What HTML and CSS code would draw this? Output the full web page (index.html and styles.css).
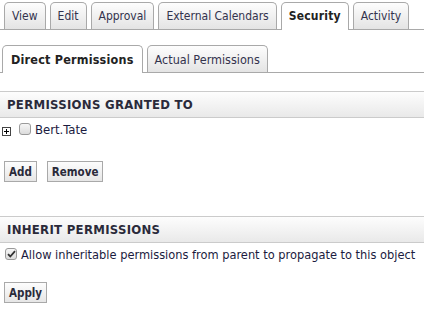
FILE: index.html
```html
<!DOCTYPE html>
<html>
<head>
<meta charset="utf-8">
<link rel="stylesheet" href="styles.css">
</head>
<body>
<div class="tabs top">
  <span class="tab">View</span>
  <span class="tab">Edit</span>
  <span class="tab">Approval</span>
  <span class="tab">External Calendars</span>
  <span class="tab active">Security</span>
  <span class="tab">Activity</span>
</div>
<div class="tabs sub">
  <span class="tab active">Direct Permissions</span>
  <span class="tab">Actual Permissions</span>
</div>
<div class="section-head">PERMISSIONS GRANTED TO</div>
<div class="perm-row">
  <span class="expander"><svg width="9" height="9" viewBox="0 0 9 9"><rect x="0.5" y="0.5" width="8" height="8" fill="#fff" stroke="#444"/><path d="M2 4.5h5M4.5 2v5" stroke="#000"/></svg></span>
  <span class="cb"></span>
  <span class="name">Bert.Tate</span>
</div>
<div class="buttons">
  <button class="btn">Add</button>
  <button class="btn">Remove</button>
</div>
<div class="section-head second">INHERIT PERMISSIONS</div>
<div class="inherit-row">
  <span class="cb checked"><svg width="9" height="8" viewBox="0 0 9 8"><path d="M1 4.2l2.3 2.3L8 1.2" fill="none" stroke="#333" stroke-width="1.8"/></svg></span>
  <span class="label">Allow inheritable permissions from parent to propagate to this object</span>
</div>
<div class="buttons apply">
  <button class="btn">Apply</button>
</div>
</body>
</html>
```
FILE: styles.css
```css
html, body { margin: 0; padding: 0; background: #fff; }
body {
  font-family: "DejaVu Sans Condensed", "DejaVu Sans", sans-serif;
  font-size: 12px;
  color: #2b2b4a;
  width: 424px;
  height: 309px;
  overflow: hidden;
}
.tabs {
  display: flex;
  gap: 4px;
  padding-left: 3px;
  border-bottom: 1px solid #a9a9a9;
  align-items: flex-end;
}
.tabs.top { margin-top: 2px; padding-left: 4px; }
.tabs.sub { margin-top: 15px; padding-left: 2px; }
.tab {
  display: block;
  flex-shrink: 0;
  white-space: nowrap;
  height: 27px;
  line-height: 27px;
  padding: 0 7px;
  box-sizing: border-box;
  border: 1px solid #a9a9a9;
  border-bottom: none;
  border-radius: 5px 5px 0 0;
  background: linear-gradient(#fdfdfd, #e4e4e4);
  font-size: 12px;
  color: #33334d;
}
.tab.active {
  background: #fff;
  font-weight: bold;
  color: #222;
  height: 28px;
  margin-bottom: -1px;
  letter-spacing: 0.2px;
}
.sub .tab { font-size: 12.5px; }
.sub .tab.active { padding: 0 8px; }
.section-head {
  margin-top: 18px;
  height: 27px;
  box-sizing: border-box;
  border-top: 1px solid #cbcbcb;
  border-bottom: 1px solid #cbcbcb;
  background: linear-gradient(#fdfdfd, #e9e9e9);
  padding-left: 7px;
  line-height: 25px;
  font-weight: bold;
  font-size: 13px;
  letter-spacing: 0.3px;
  color: #2a2a3a;
}
.section-head.second { margin-top: 34px; }
.perm-row {
  display: flex;
  align-items: center;
  height: 22px;
  margin-top: 0;
  padding-left: 2px;
}
.expander { display: flex; margin-top: 4px; }
.cb {
  display: inline-flex;
  align-items: center;
  justify-content: center;
  width: 12px;
  height: 12px;
  box-sizing: border-box;
  border: 1px solid #9a9a9a;
  border-radius: 3px;
  background: linear-gradient(#f6f6f6, #dcdcdc);
  margin-left: 8px;
  margin-right: 4px;
}
.name { font-size: 13px; color: #1b1b40; }
.buttons { display: flex; gap: 10px; padding-left: 4px; margin-top: 21px; }
.btn {
  font-family: inherit;
  font-weight: bold;
  font-size: 11.5px;
  color: #2a2a3a;
  height: 21px;
  padding: 0 4px;
  border: 1px solid #a9a9a9;
  border-radius: 0;
  background: linear-gradient(#fdfdfd, #e6e6e6);
  margin: 0;
}
.inherit-row {
  display: flex;
  align-items: center;
  height: 22px;
  padding-left: 5px;
}
.inherit-row .cb { margin-left: 0; margin-right: 4px; }
.label { font-size: 12.7px; color: #1b1b40; }
.buttons.apply { margin-top: 17px; }
```
